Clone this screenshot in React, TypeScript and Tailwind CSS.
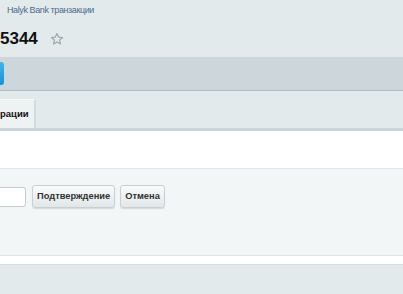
import React from 'react';

const App: React.FC = () => {
  return (
    <div className="w-[403px] h-[294px] overflow-hidden bg-[#e2eaec] font-['Liberation_Sans',Arial,sans-serif]">
      {/* Header */}
      <div className="h-[57px] pl-[7px] pt-[5px]">
        <div className="text-[9px] leading-[11px] text-[#4f6b8a] tracking-[-0.4px]">Halyk Bank транзакции</div>
        <div className="flex items-center gap-[12px] mt-[13px] -ml-[7px]">
          <span className="text-[17px] leading-[20px] font-bold text-[#111]">5344</span>
          <svg width="14" height="14" viewBox="0 0 24 24" fill="none" stroke="#9aa4aa" strokeWidth="2" strokeLinejoin="round">
            <path d="M12 2.5l2.9 6.2 6.6.7-5 4.5 1.4 6.6L12 17.2 6.1 20.5l1.4-6.6-5-4.5 6.6-.7z" />
          </svg>
        </div>
      </div>

      {/* Toolbar band */}
      <div className="h-[34px] bg-[#cdd6da] border-b border-[#aebbc1] flex items-center">
        <div className="w-[4px] h-[23px] bg-gradient-to-b from-[#3db5ee] to-[#1592d4] rounded-r-[3px]" />
      </div>

      {/* Tabs */}
      <div className="h-[40px] flex items-end border-b-[3px] border-[#ccd5d9]">
        <div className="h-[29px] w-[36px] bg-[#eef2f3] border-r-2 border-t border-[#d3dbde] border-t-[#f7f9fa] flex items-center">
          <span className="text-[9.5px] font-bold text-[#111]">рации</span>
        </div>
      </div>

      {/* White area */}
      <div className="h-[37px] bg-white" />

      {/* Action panel */}
      <div className="h-[88px] bg-[#f2f6f7] border-t border-[#dfe6e8] border-b border-b-[#dce4e6] pt-[16px]">
        <div className="flex items-center gap-[5px]">
          <div className="w-[26px] h-[20px] bg-white border border-[#c4ccd0] rounded-r-[3px] border-l-0" />
          <button className="h-[23px] px-[4px] ml-[1px] rounded-[3px] border border-[#c8d0d3] bg-gradient-to-b from-[#fafbfb] to-[#e1e7e9] text-[9.3px] font-bold text-[#333] shadow-[0_1px_1px_rgba(0,0,0,0.12)]">
            Подтверждение
          </button>
          <button className="h-[23px] px-[4px] rounded-[3px] border border-[#c8d0d3] bg-gradient-to-b from-[#fafbfb] to-[#e1e7e9] text-[9.3px] font-bold text-[#333] shadow-[0_1px_1px_rgba(0,0,0,0.12)]">
            Отмена
          </button>
        </div>
      </div>

      {/* White strip */}
      <div className="h-[9px] bg-white border-b border-[#d6dfe2]" />
    </div>
  );
};

export default App;
